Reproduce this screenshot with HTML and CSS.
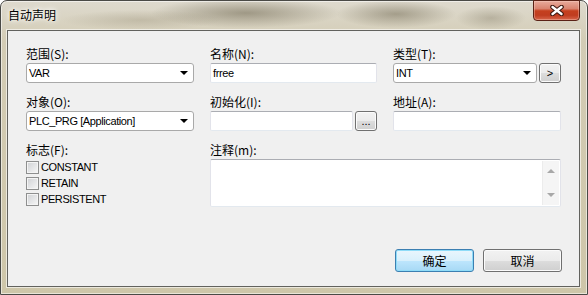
FILE: index.html
```html
<!DOCTYPE html>
<html lang="zh-CN">
<head>
  <meta charset="UTF-8" />
  <title>自动声明</title>
  <link rel="stylesheet" href="styles.css">
</head>
<body>

<div class="window">
  <div class="titlebar">
    <span class="title">自动声明</span>
    <button class="close">
      <svg width="14" height="11" viewBox="0 0 14 11">
        <path d="M2.5 2 L11.5 9 M11.5 2 L2.5 9" stroke="#3d1810" stroke-width="4.6" stroke-linecap="round"/>
        <path d="M2.5 2 L11.5 9 M11.5 2 L2.5 9" stroke="#ffffff" stroke-width="2.4" stroke-linecap="round"/>
      </svg>
    </button>
  </div>

  <div class="client">
    <div class="fields">
      <div class="field">
        <label>范围(S):</label>
        <div class="combo"><span>VAR</span><i class="arrow"></i></div>
      </div>
      <div class="field">
        <label>名称(N):</label>
        <div class="textbox">frree</div>
      </div>
      <div class="field">
        <label>类型(T):</label>
        <div class="with-btn">
          <div class="combo"><span>INT</span><i class="arrow"></i></div>
          <button class="small-btn">&gt;</button>
        </div>
      </div>

      <div class="field">
        <label>对象(O):</label>
        <div class="combo"><span>PLC_PRG [Application]</span><i class="arrow"></i></div>
      </div>
      <div class="field">
        <label>初始化(I):</label>
        <div class="with-btn">
          <div class="textbox"></div>
          <button class="small-btn">...</button>
        </div>
      </div>
      <div class="field">
        <label>地址(A):</label>
        <div class="textbox"></div>
      </div>

      <div class="field">
        <label>标志(F):</label>
        <div class="flags">
          <div class="flag"><input type="checkbox"><span>CONSTANT</span></div>
          <div class="flag"><input type="checkbox"><span>RETAIN</span></div>
          <div class="flag"><input type="checkbox"><span>PERSISTENT</span></div>
        </div>
      </div>
      <div class="field memo-field">
        <label>注释(m):</label>
        <div class="memo">
          <div class="scrollbar">
            <i class="up"></i>
            <i class="down"></i>
          </div>
        </div>
      </div>
    </div>

    <div class="actions">
      <button class="btn default">确定</button>
      <button class="btn">取消</button>
    </div>
  </div>
</div>

</body>
</html>
```

FILE: styles.css
```css
* {
  box-sizing: border-box;
}

body {
  margin: 0;
  font-family: "Liberation Sans", "Noto Sans CJK SC", sans-serif;
  font-size: 11px;
  color: #000;
}

.window {
  width: 588px;
  height: 295px;
  border: 1px solid #4a4a46;
  border-radius: 7px 7px 0 0;
  padding: 0 7px 7px 6px;
  display: flex;
  flex-direction: column;
  box-shadow: inset 0 0 0 1px rgba(255,255,255,0.55);
  background:
    radial-gradient(95px 15px at 245px 12px, rgba(110,102,80,0.55), rgba(110,102,80,0)),
    radial-gradient(60px 14px at 395px 13px, rgba(110,102,80,0.5), rgba(110,102,80,0)),
    radial-gradient(35px 12px at 490px 17px, rgba(120,112,90,0.35), rgba(120,112,90,0)),
    radial-gradient(80px 10px at 140px 19px, rgba(140,130,105,0.3), rgba(140,130,105,0)),
    linear-gradient(#dedace, #d3ccb5 40px, #cec6a9);
}

.titlebar {
  height: 29px;
  display: flex;
  justify-content: space-between;
  align-items: flex-start;
}

.title {
  font-family: "Noto Sans CJK SC", sans-serif;
  font-size: 12px;
  line-height: 16px;
  margin: 6px 0 0 1px;
  text-shadow: 0 0 4px #fff, 0 0 7px #fff;
}

.close {
  width: 47px;
  height: 21px;
  margin-top: -1px;
  padding: 0;
  border: 1px solid #5a2216;
  border-radius: 0 0 4px 4px;
  display: flex;
  align-items: center;
  justify-content: center;
  background: linear-gradient(#e8ab9c 0%, #d98470 40%, #c5401f 52%, #c03d20 75%, #d7664b 100%);
  box-shadow: inset 0 0 0 1px rgba(255,220,210,0.35);
}

.client {
  flex: 1;
  background: #f0f0f0;
  border: 1px solid #62625e;
  box-shadow: 0 0 0 1px rgba(255,255,255,0.6);
  display: flex;
  flex-direction: column;
  padding: 15px 17px 0 18px;
}

.fields {
  display: grid;
  grid-template-columns: 168px 167px 168px;
  column-gap: 16px;
  row-gap: 11px;
}

.field {
  display: flex;
  flex-direction: column;
}

.field label {
  height: 17px;
  line-height: 16px;
  font-family: "Noto Sans CJK SC", sans-serif;
  font-size: 12px;
}

.memo-field {
  grid-column: 2 / 4;
}

.combo,
.textbox {
  height: 20px;
  background: #fff;
  display: flex;
  align-items: center;
  padding-left: 2px;
  letter-spacing: -0.4px;
}

.combo {
  justify-content: space-between;
  border: 1px solid #a9a9a9;
  border-radius: 3px;
}

.textbox {
  border: 1px solid;
  border-color: #abadb3 #e2e3ea #e3e9ef #e2e3ea;
  border-radius: 2px;
}

.arrow {
  width: 0;
  height: 0;
  margin-right: 5px;
  border-left: 4px solid transparent;
  border-right: 4px solid transparent;
  border-top: 4px solid #000;
}

.with-btn {
  display: flex;
  gap: 2px;
}

.with-btn .combo,
.with-btn .textbox {
  flex: 1;
}

.small-btn {
  width: 22px;
  height: 20px;
  padding: 0;
  border: 1px solid #707070;
  border-radius: 3px;
  background: linear-gradient(#f2f2f2 0%, #ebebeb 50%, #dddddd 51%, #cfcfcf 100%);
  box-shadow: inset 0 0 0 1px #fbfbfb;
  font-family: "Liberation Sans", sans-serif;
  font-size: 11px;
  color: #000;
}

.flags {
  padding-top: 2px;
  display: flex;
  flex-direction: column;
}

.flag {
  height: 16px;
  display: flex;
  align-items: flex-start;
  gap: 2px;
}

.flag span {
  line-height: 13px;
  letter-spacing: -0.4px;
}

.flag input {
  appearance: none;
  width: 13px;
  height: 13px;
  margin: 0;
  border: 1px solid #8e8f8f;
  background: linear-gradient(135deg, #cfd1d4, #f7f7f7);
  box-shadow: inset 0 0 0 1px #f4f4f4;
}

.memo {
  height: 48px;
  background: #fff;
  border: 1px solid;
  border-color: #abadb3 #e2e3ea #e3e9ef #e2e3ea;
  border-radius: 2px;
  display: flex;
  justify-content: flex-end;
  padding: 1px;
}

.scrollbar {
  width: 17px;
  background: #f5f5f5;
  border-left: 1px solid #ececec;
  display: flex;
  flex-direction: column;
  justify-content: space-between;
  align-items: center;
  padding: 8px 0 8px;
}

.scrollbar .up,
.scrollbar .down {
  width: 0;
  height: 0;
  border-left: 4px solid transparent;
  border-right: 4px solid transparent;
}

.scrollbar .up {
  border-bottom: 4px solid #a8a8a8;
}

.scrollbar .down {
  border-top: 4px solid #a8a8a8;
}

.actions {
  margin-top: 40px;
  display: flex;
  justify-content: flex-end;
  gap: 9px;
}

.btn {
  width: 79px;
  height: 23px;
  padding: 0;
  border: 1px solid #707070;
  border-radius: 3px;
  background: linear-gradient(#f2f2f2 0%, #ebebeb 50%, #dddddd 51%, #cfcfcf 100%);
  box-shadow: inset 0 0 0 1px #fbfbfb;
  font-family: "Noto Sans CJK SC", sans-serif;
  font-size: 12px;
  color: #000;
}

.btn.default {
  border-color: #3c7fb1;
  background: linear-gradient(#eaf6fd 0%, #d9f0fc 50%, #bee6fd 51%, #a7d9f5 100%);
  box-shadow: inset 0 0 0 1px #8fdcf8;
}
```
